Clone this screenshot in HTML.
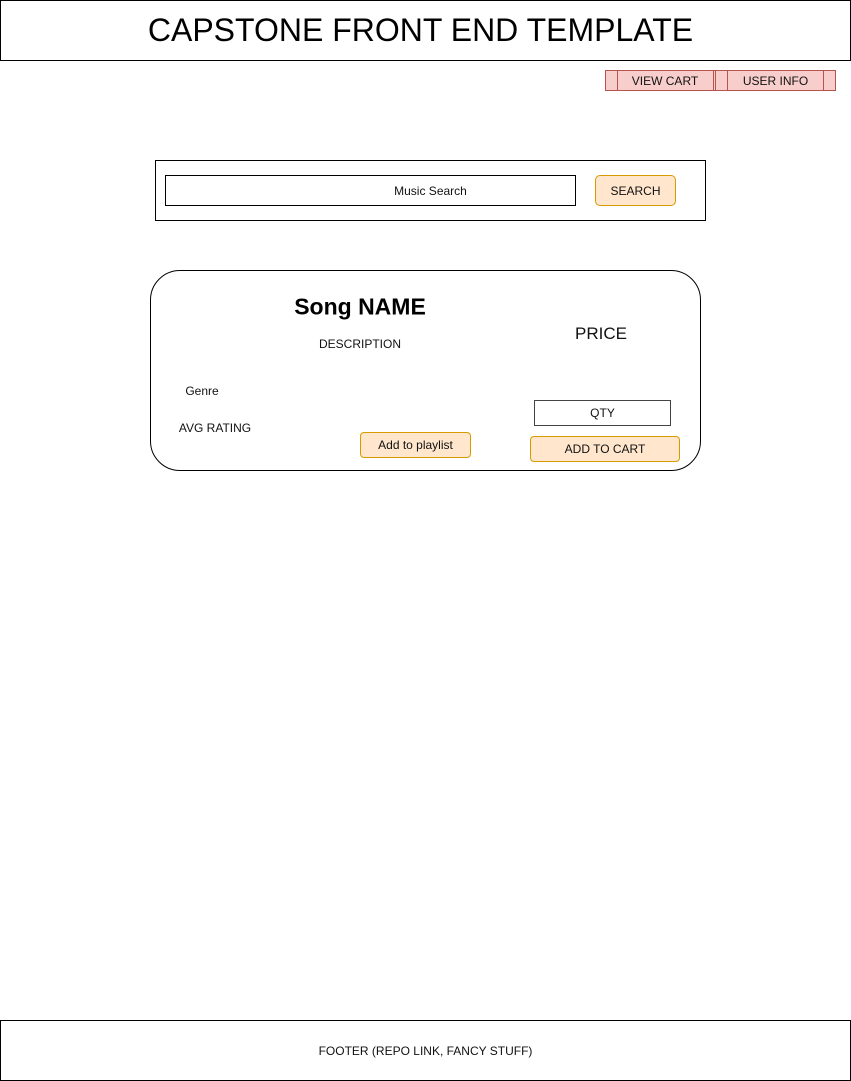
<!DOCTYPE html>
<html><head><meta charset="utf-8"><style>
html,body{margin:0;padding:0;background:#fff;width:851px;height:1081px;overflow:hidden}
body{position:relative;font-family:"Liberation Sans",Arial,sans-serif;color:#000}
.b{position:absolute;box-sizing:border-box;display:flex;align-items:center;justify-content:center;white-space:nowrap}
.t{position:absolute;white-space:nowrap;transform:translate(-50%,-50%)}
.pink{background:#f8cecc;border:1px solid #b85450;font-size:12px;color:#111}
.org{background:#ffe6cc;border:1px solid #d79b00;border-radius:4px;font-size:12px;color:#111}
</style></head><body>
<div class="b" style="left:0;top:0;width:851px;height:61px;border:1px solid #000;font-size:32px;padding-right:10px">CAPSTONE FRONT END TEMPLATE</div>

<div class="b pink" style="left:605px;top:70px;width:111px;height:21px;padding-left:9px">VIEW CART</div>
<div style="position:absolute;left:617px;top:70px;width:1px;height:21px;background:#b85450"></div>
<div style="position:absolute;left:713px;top:70px;width:1px;height:21px;background:#b85450"></div>
<div class="b pink" style="left:715px;top:70px;width:121px;height:21px">USER INFO</div>
<div style="position:absolute;left:727px;top:70px;width:1px;height:21px;background:#b85450"></div>
<div style="position:absolute;left:823px;top:70px;width:1px;height:21px;background:#b85450"></div>

<div class="b" style="left:155px;top:160px;width:551px;height:61px;border:1px solid #000"></div>
<div class="b" style="left:165px;top:175px;width:411px;height:31px;border:1px solid #000;font-size:12px;color:#111;padding-left:120px">Music Search</div>
<div class="b org" style="left:595px;top:175px;width:81px;height:31px;border-radius:5px">SEARCH</div>

<div class="b" style="left:150px;top:270px;width:551px;height:201px;border:1px solid #000;border-radius:30px"></div>
<div class="t" style="left:360px;top:307px;font-size:23px;font-weight:bold">Song NAME</div>
<div class="t" style="left:360px;top:344px;font-size:12px;color:#111">DESCRIPTION</div>
<div class="t" style="left:601px;top:334px;font-size:17px;color:#111">PRICE</div>
<div class="t" style="left:202px;top:391px;font-size:12px;color:#111">Genre</div>
<div class="t" style="left:215px;top:428px;font-size:12px;color:#111">AVG RATING</div>
<div class="b org" style="left:360px;top:432px;width:111px;height:26px">Add to playlist</div>
<div class="b" style="left:534px;top:400px;width:137px;height:26px;border:1px solid #444;font-size:12px;color:#111">QTY</div>
<div class="b org" style="left:530px;top:436px;width:150px;height:26px">ADD TO CART</div>

<div class="b" style="left:0;top:1020px;width:851px;height:61px;border:1px solid #000;font-size:12px;color:#111">FOOTER (REPO LINK, FANCY STUFF)</div>
</body></html>
